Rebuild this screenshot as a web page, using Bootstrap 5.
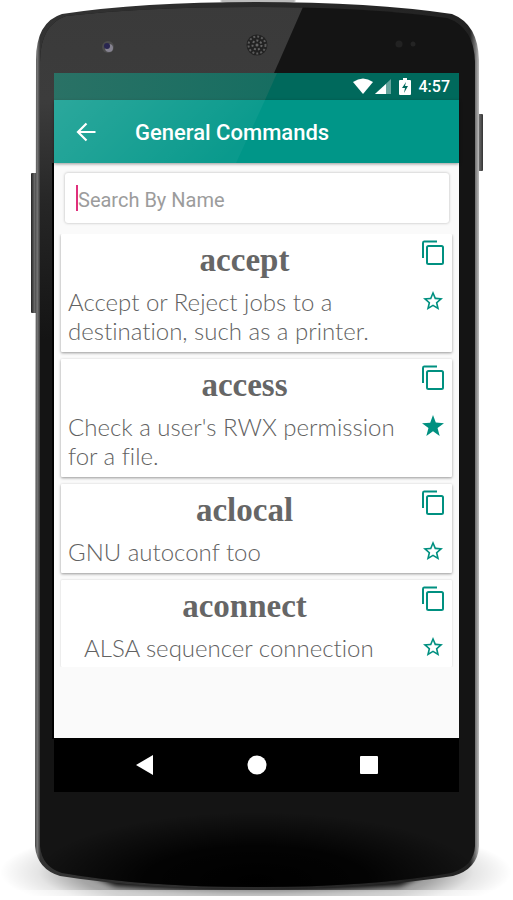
<!DOCTYPE html>
<html lang="en">
<head>
<meta charset="utf-8">
<meta name="viewport" content="width=device-width, initial-scale=1">
<title>General Commands</title>
<link href="https://cdn.jsdelivr.net/npm/bootstrap@5.3.0/dist/css/bootstrap.min.css" rel="stylesheet">
<style>
  body { background: #fff; font-family: Roboto, sans-serif; }
  .device { max-width: 513px; padding: 73px 54px 108px; isolation: isolate; }
  .device-art { inset: 0; z-index: -1; }
  .device-glare { inset: 0; z-index: 2; pointer-events: none; }
  .screen { background: #fafafa; }
  .status-bar { background: #00695c; height: 27px; padding: 0 9px; font-size: 16px; line-height: 28px; }
  .app-bar { background: #009688; height: 63px; padding: 0 20px; box-shadow: 0 1px 3px rgba(0,0,0,.4); }
  .app-title { font-size: 22px; line-height: 28px; padding-top: 2px; margin-left: 37px; }
  .icon-btn { width: 24px; height: 28px; line-height: 0; color: #009080; }
  .search-box { margin: 10px 10px 11px 11px; padding: 12px 11px; border-radius: 3px; box-shadow: 0 0 3px rgba(0,0,0,.28); }
  .search-box input { height: 26px; font-size: 20px; border-left: 2px solid #e0307c !important; outline: 0; }
  .search-box input::placeholder { color: #9c9c9c; opacity: 1; }
  .command-list { gap: 7px; padding: 0 7px; overflow: hidden; }
  .command { padding: 0 7px 7px; border-radius: 1px; box-shadow: 0 1px 3px rgba(0,0,0,.4); }
  .command:last-child { padding-bottom: 5px; box-shadow: 0 0 2px rgba(0,0,0,.2); }
  .command-name { font: bold 33px/53px "Liberation Serif", serif; color: #666; }
  .command-text { font: 300 24px/29px Lato, sans-serif; color: #626262; font-variant-ligatures: none; }
  .command-tools { padding-top: 5px; gap: 20px; }
  .nav-keys { background: #000; height: 54px; gap: 80px; }
  .nav-keys .btn { width: 32px; height: 32px; line-height: 0; }
</style>
<script src="https://cdn.jsdelivr.net/npm/bootstrap@5.3.0/dist/js/bootstrap.bundle.min.js"></script>
</head>
<body>
<div class="device position-relative d-flex flex-column min-vh-100 mx-auto">
  <svg class="device-art position-absolute w-100 h-100" viewBox="0 0 513 900" preserveAspectRatio="none" aria-hidden="true">
    <defs>
      <linearGradient id="edge" x1="0" x2="1" y1="0" y2="0">
        <stop offset="0" stop-color="#444"/><stop offset=".005" stop-color="#777"/><stop offset=".012" stop-color="#333"/>
        <stop offset=".98" stop-color="#222"/><stop offset=".992" stop-color="#777"/><stop offset="1" stop-color="#bbb"/>
      </linearGradient>
      <linearGradient id="sheen" x1="0" x2="0" y1="0" y2="1">
        <stop offset="0" stop-color="#3a3a3a"/><stop offset=".3" stop-color="#3c3c3c"/><stop offset=".6" stop-color="#262626"/><stop offset="1" stop-color="#141414"/>
      </linearGradient>
      <linearGradient id="key" x1="0" x2="1" y1="0" y2="0">
        <stop offset="0" stop-color="#222"/><stop offset=".5" stop-color="#666"/><stop offset="1" stop-color="#333"/>
      </linearGradient>
      <radialGradient id="chin"><stop offset="0" stop-color="#000"/><stop offset=".5" stop-color="#000" stop-opacity=".85"/><stop offset="1" stop-color="#000" stop-opacity="0"/></radialGradient>
      <radialGradient id="ground"><stop offset="0" stop-color="#000" stop-opacity=".9"/><stop offset=".7" stop-color="#000" stop-opacity=".5"/><stop offset=".85" stop-color="#000" stop-opacity=".15"/><stop offset="1" stop-color="#000" stop-opacity="0"/></radialGradient>
      <filter id="tight" x="-20%" y="-50%" width="140%" height="200%"><feGaussianBlur stdDeviation="3"/></filter>
      <clipPath id="above"><rect width="513" height="896"/></clipPath>
      <clipPath id="face"><path d="M40 62Q40 25 66 16Q145 7 256 7T447 18Q474 27 475 62V846Q474 866 451 873Q370 887 256 887T62 873Q42 867 40 846Z"/></clipPath>
    </defs>
    <g clip-path="url(#above)">
      <ellipse cx="256" cy="872" rx="256" ry="52" fill="url(#ground)" opacity=".7" clip-path="url(#lower)"/>
      <path d="M90 874H425L400 886Q320 891 256 891T115 886Z" fill="#000" filter="url(#tight)"/>
    </g>
    <rect y="890" width="513" height="10" fill="#fff" opacity=".5"/>
    <ellipse cx="258" cy="1" rx="38" ry="3" fill="#bbb"/>
    <rect x="31" y="173" width="7" height="140" rx="1" fill="url(#key)"/>
    <rect x="476" y="114" width="7" height="57" rx="1" fill="url(#key)"/>
    <path d="M36 60Q36 22 62 14Q140 2 256 2T452 14Q478 24 479 60V846Q478 869 453 876Q370 889 256 889T60 876Q37 869 35 846Z" fill="url(#edge)"/>
    <g clip-path="url(#face)">
      <rect width="513" height="900" fill="#141414"/>
      <path d="M0 0H306L157 340H0Z" fill="url(#sheen)"/>
      <ellipse cx="256" cy="880" rx="225" ry="68" fill="url(#chin)"/>
    </g>
    <path d="M53 163V739" stroke="#000" stroke-width="2"/>
    <circle cx="108" cy="47" r="6" fill="#4c4c4c"/><circle cx="109" cy="48" r="4" fill="#85828f"/><circle cx="107" cy="46" r="3" fill="#292650"/>
    <circle cx="257" cy="45" r="10.5" fill="#222"/>
    <circle cx="257" cy="45" r="8.5" fill="none" stroke="#5c5c5c" stroke-width="2" stroke-dasharray="2 2"/>
    <circle cx="257" cy="45" r="4.500" fill="none" stroke="#656565" stroke-width="2" stroke-dasharray="2 2"/>
    <circle cx="257" cy="45" r="1.500" fill="#666"/>
    <circle cx="399" cy="44" r="3.500" fill="#222"/><circle cx="413" cy="44" r="2.500" fill="#242424"/>
  </svg>
  <svg class="device-glare position-absolute w-100 h-100" viewBox="0 0 513 900" preserveAspectRatio="none" aria-hidden="true">
    <defs><linearGradient id="glare" x1="0" x2="1" y1="0" y2=".3"><stop offset="0" stop-color="#fff" stop-opacity=".17"/><stop offset="1" stop-color="#fff" stop-opacity=".04"/></linearGradient>
    <linearGradient id="haze" x1="0" x2="1" y1="0" y2="0"><stop offset="0" stop-color="#a08a80" stop-opacity=".26"/><stop offset="1" stop-color="#a08a80" stop-opacity=".14"/></linearGradient></defs>
    <path d="M54 73H277L265 100H54Z" fill="url(#haze)"/>
    <path d="M54 100H265L236 163H54Z" fill="url(#glare)"/>
  </svg>

  <div class="screen d-flex flex-column flex-grow-1">
    <div class="status-bar d-flex justify-content-end align-items-center text-white fw-medium">
      <svg width="58" height="20" viewBox="0 0 58 20" fill="#fff" aria-hidden="true">
        <path d="M0 5Q10-2 20 5L10 17Z"/>
        <path d="M38 2V17H22Z" opacity=".4"/><path d="M33 7V17H22Z"/>
        <path d="M47 3H50V1H54V3H57Q58 3 58 4V17Q58 18 57 18H47Q46 18 46 17V4Q46 3 47 3Z"/>
        <path d="M53 5L49 11H52L51 16L55 9H52Z" fill="#00695c"/>
      </svg>
      <span class="ms-2">4:57</span>
    </div>
    <header class="app-bar d-flex align-items-center text-white position-relative">
      <button type="button" class="icon-btn btn p-0 border-0 text-white" aria-label="Back">
        <svg width="22" height="22" viewBox="0 0 22 22" fill="none" stroke="#fff" stroke-width="2.200" aria-hidden="true"><path d="M20.500 11H3M11.500 2.500L3 11L11.500 19.500"/></svg>
      </button>
      <h1 class="app-title fw-medium mb-0 text-nowrap">General Commands</h1>
    </header>
    <main class="d-flex flex-column flex-grow-1">
      <div class="search-box bg-white">
        <input type="text" class="w-100 border-0 px-0 pb-0 pt-1 bg-white d-block" placeholder="Search By Name" aria-label="Search By Name">
      </div>
      <div class="command-list d-flex flex-column pb-0">
        <article class="command bg-white d-flex">
          <div class="flex-grow-1"><h2 class="command-name text-center mb-0">accept</h2><p class="command-text mb-0">Accept or Reject jobs to a<br>destination, such as a printer.</p></div>
          <div class="command-tools d-flex flex-column">
            <button type="button" class="icon-btn btn p-0 border-0" aria-label="Copy accept"><svg width="24" height="26" viewBox="0 0 24 26" fill="none" stroke="currentColor" stroke-width="2" aria-hidden="true"><path d="M2 18V3Q2 1.500 3 1.500H16"/><rect x="6" y="6" width="16" height="18" rx="1.500"/></svg></button>
            <button type="button" class="icon-btn btn p-0 border-0" aria-label="Add accept to favourites"><svg width="24" height="24" viewBox="0 0 24 24" aria-hidden="true"><path fill="currentColor" d="M22 9.240L14.810 8.620L12 2L9.190 8.630L2 9.240L7.460 13.970L5.820 21L12 17.270L18.180 21L16.550 13.970ZM12 15.400L8.240 17.670L9.240 13.390L5.920 10.510L10.300 10.130L12 6.100L13.710 10.140L18.090 10.520L14.770 13.400L15.770 17.680Z"/></svg></button>
          </div>
        </article>
        <article class="command bg-white d-flex">
          <div class="flex-grow-1"><h2 class="command-name text-center mb-0">access</h2><p class="command-text mb-0">Check a user's RWX permission<br>for a file.</p></div>
          <div class="command-tools d-flex flex-column">
            <button type="button" class="icon-btn btn p-0 border-0" aria-label="Copy access"><svg width="24" height="26" viewBox="0 0 24 26" fill="none" stroke="currentColor" stroke-width="2" aria-hidden="true"><path d="M2 18V3Q2 1.500 3 1.500H16"/><rect x="6" y="6" width="16" height="18" rx="1.500"/></svg></button>
            <button type="button" class="icon-btn btn p-0 border-0" aria-label="Remove access from favourites"><svg width="24" height="24" viewBox="0 0 24 24" aria-hidden="true"><path fill="currentColor" d="M23 9.240L14.810 8.620L12 1L9.190 8.630L1 9.240L7.460 13.970L5.320 22L12 17.270L18.680 22L16.550 13.970Z"/></svg></button>
          </div>
        </article>
        <article class="command bg-white d-flex">
          <div class="flex-grow-1"><h2 class="command-name text-center mb-0">aclocal</h2><p class="command-text mb-0">GNU autoconf too</p></div>
          <div class="command-tools d-flex flex-column">
            <button type="button" class="icon-btn btn p-0 border-0" aria-label="Copy aclocal"><svg width="24" height="26" viewBox="0 0 24 26" fill="none" stroke="currentColor" stroke-width="2" aria-hidden="true"><path d="M2 18V3Q2 1.500 3 1.500H16"/><rect x="6" y="6" width="16" height="18" rx="1.500"/></svg></button>
            <button type="button" class="icon-btn btn p-0 border-0" aria-label="Add aclocal to favourites"><svg width="24" height="24" viewBox="0 0 24 24" aria-hidden="true"><path fill="currentColor" d="M22 9.240L14.810 8.620L12 2L9.190 8.630L2 9.240L7.460 13.970L5.820 21L12 17.270L18.180 21L16.550 13.970ZM12 15.400L8.240 17.670L9.240 13.390L5.920 10.510L10.300 10.130L12 6.100L13.710 10.140L18.090 10.520L14.770 13.400L15.770 17.680Z"/></svg></button>
          </div>
        </article>
        <article class="command bg-white d-flex">
          <div class="flex-grow-1"><h2 class="command-name text-center mb-0">aconnect</h2><p class="command-text ps-3 mb-0">ALSA sequencer connection</p></div>
          <div class="command-tools d-flex flex-column">
            <button type="button" class="icon-btn btn p-0 border-0" aria-label="Copy aconnect"><svg width="24" height="26" viewBox="0 0 24 26" fill="none" stroke="currentColor" stroke-width="2" aria-hidden="true"><path d="M2 18V3Q2 1.500 3 1.500H16"/><rect x="6" y="6" width="16" height="18" rx="1.500"/></svg></button>
            <button type="button" class="icon-btn btn p-0 border-0" aria-label="Add aconnect to favourites"><svg width="24" height="24" viewBox="0 0 24 24" aria-hidden="true"><path fill="currentColor" d="M22 9.240L14.810 8.620L12 2L9.190 8.630L2 9.240L7.460 13.970L5.820 21L12 17.270L18.180 21L16.550 13.970ZM12 15.400L8.240 17.670L9.240 13.390L5.920 10.510L10.300 10.130L12 6.100L13.710 10.140L18.090 10.520L14.770 13.400L15.770 17.680Z"/></svg></button>
          </div>
        </article>
      </div>
    </main>
    <nav class="nav-keys d-flex justify-content-center align-items-center" aria-label="System">
      <button type="button" class="btn p-0 border-0" aria-label="Back"><svg width="32" height="20" viewBox="0 0 32 20" aria-hidden="true"><path d="M7 10L24 0V20Z" fill="#fff"/></svg></button>
      <button type="button" class="btn p-0 border-0" aria-label="Home"><svg width="32" height="20" viewBox="0 0 32 20" aria-hidden="true"><circle cx="16" cy="10" r="9.500" fill="#fff"/></svg></button>
      <button type="button" class="btn p-0 border-0" aria-label="Overview"><svg width="32" height="20" viewBox="0 0 32 20" aria-hidden="true"><rect x="7" y="1" width="18" height="18" rx="1" fill="#fff"/></svg></button>
    </nav>
  </div>
</div>
</body>
</html>
